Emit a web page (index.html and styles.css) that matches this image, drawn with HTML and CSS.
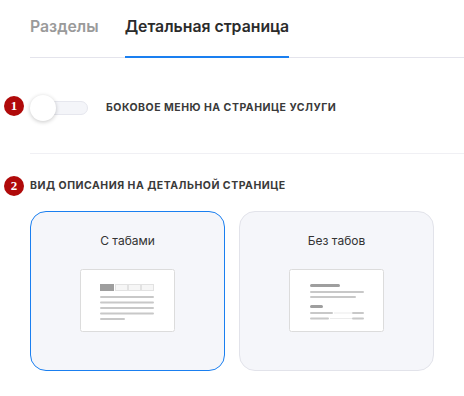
FILE: index.html
```html
<!DOCTYPE html>
<html>
<head>
    <meta name="viewport" content="width=device-width, initial-scale=1">
    <title>Детальная страница</title>
    <link rel="stylesheet" href="styles.css">
</head>
<body>
    <div class="tabs">
        <div class="tab">Разделы</div>
        <div class="tab active">Детальная страница</div>
    </div>

    <div class="setting toggle-row">
        <span class="badge badge-1">1</span>
        <div class="toggle">
            <div class="knob"></div>
        </div>
        <span class="label">Боковое меню на странице услуги</span>
    </div>

    <div class="setting view-row">
        <span class="badge badge-2">2</span>
        <div class="label">Вид описания на детальной странице</div>

        <div class="cards">
            <div class="card selected">
                <div class="card-title">С табами</div>
                <svg class="preview" width="95" height="63" viewBox="0 0 95 63">
                    <rect x="0.5" y="0.5" width="94" height="62" rx="2" fill="#fff" stroke="#dcdcdc"/>
                    <rect x="20" y="15" width="14" height="7" fill="#9e9e9e"/>
                    <rect x="35.5" y="15.5" width="12" height="6" fill="#f6f6f6" stroke="#e2e2e2"/>
                    <rect x="48.5" y="15.5" width="12" height="6" fill="#f6f6f6" stroke="#e2e2e2"/>
                    <rect x="61.5" y="15.5" width="12" height="6" fill="#f6f6f6" stroke="#e2e2e2"/>
                    <rect x="20" y="27" width="54" height="2" rx="1" fill="#c8c8c8"/>
                    <rect x="20" y="32.5" width="54" height="2" rx="1" fill="#c8c8c8"/>
                    <rect x="20" y="38" width="54" height="2" rx="1" fill="#c8c8c8"/>
                    <rect x="20" y="43.5" width="54" height="2" rx="1" fill="#c8c8c8"/>
                    <rect x="20" y="49" width="25" height="2" rx="1" fill="#c8c8c8"/>
                </svg>
            </div>
            <div class="card">
                <div class="card-title">Без табов</div>
                <svg class="preview" width="95" height="63" viewBox="0 0 95 63">
                    <rect x="0.5" y="0.5" width="94" height="62" rx="2" fill="#fff" stroke="#dcdcdc"/>
                    <rect x="21" y="15" width="30" height="3" rx="1.5" fill="#9e9e9e"/>
                    <rect x="21" y="22" width="54" height="2" rx="1" fill="#c8c8c8"/>
                    <rect x="21" y="27" width="46" height="2" rx="1" fill="#c8c8c8"/>
                    <rect x="21" y="36" width="13" height="3" rx="1.5" fill="#9e9e9e"/>
                    <rect x="21" y="43" width="23" height="2" rx="1" fill="#c8c8c8"/>
                    <rect x="45" y="43.5" width="18" height="1" fill="#ececec"/>
                    <rect x="63" y="43" width="12" height="2" rx="1" fill="#c8c8c8"/>
                    <rect x="21" y="48.5" width="19" height="2" rx="1" fill="#c8c8c8"/>
                    <rect x="41" y="49" width="22" height="1" fill="#ececec"/>
                    <rect x="63" y="48.5" width="12" height="2" rx="1" fill="#c8c8c8"/>
                </svg>
            </div>
        </div>
    </div>
</body>
</html>
```

FILE: styles.css
```css
body {
    margin: 0;
    font-family: Inter, "Noto Sans", sans-serif;
    color: #333;
    background: #fff;
}

.tabs {
    display: flex;
    gap: 26px;
    margin-left: 30px;
    border-bottom: 1px solid #e4e4ec;
}

.tab {
    font-size: 15.8px;
    font-weight: 600;
    line-height: 20px;
    padding: 17px 0 19px;
    color: #9a9a9a;
    margin-bottom: -1px;
}

.tab.active {
    color: #2b2b2b;
    border-bottom: 2px solid #1a7ff0;
}

.setting {
    position: relative;
    margin-left: 30px;
}

.toggle-row {
    display: flex;
    align-items: center;
    padding: 37px 0 32px;
    border-bottom: 1px solid #f0f0f4;
}

.toggle {
    position: relative;
    width: 58px;
    height: 26px;
    display: flex;
    align-items: center;
}

.toggle::before {
    content: "";
    display: block;
    width: 56px;
    height: 12px;
    margin-left: 1px;
    border: 1px solid #e6e7ee;
    border-radius: 8px;
    background: #f4f5f9;
}

.knob {
    position: absolute;
    left: 0;
    top: 0;
    width: 26px;
    height: 26px;
    border-radius: 50%;
    background: #fff;
    box-shadow: 0 1px 4px rgba(0, 0, 0, 0.22);
}

.label {
    font-size: 10.5px;
    font-weight: 700;
    letter-spacing: 0.5px;
    text-transform: uppercase;
    color: #3a3a3a;
    line-height: 14px;
}

.toggle-row .label {
    margin-left: 18px;
}

.view-row {
    padding-top: 25px;
}

.badge {
    position: absolute;
    left: -26px;
    width: 20px;
    height: 20px;
    border-radius: 50%;
    background: #b00a0a;
    color: #fff;
    font-family: "Liberation Serif", serif;
    font-weight: 700;
    font-size: 13px;
    line-height: 20px;
    text-align: center;
}

.badge-1 {
    top: 38px;
}

.badge-2 {
    top: 22px;
}

.cards {
    display: flex;
    gap: 14px;
    margin-top: 18px;
}

.card {
    box-sizing: border-box;
    width: 195px;
    height: 160px;
    border: 1px solid #e2e3ea;
    border-radius: 16px;
    background: #f5f6fa;
    display: flex;
    flex-direction: column;
    align-items: center;
    padding-top: 21px;
}

.card.selected {
    border-color: #1a7ff0;
}

.card-title {
    font-size: 12px;
    line-height: 16px;
    color: #333;
}

.preview {
    display: block;
    margin-top: 20px;
}
```
